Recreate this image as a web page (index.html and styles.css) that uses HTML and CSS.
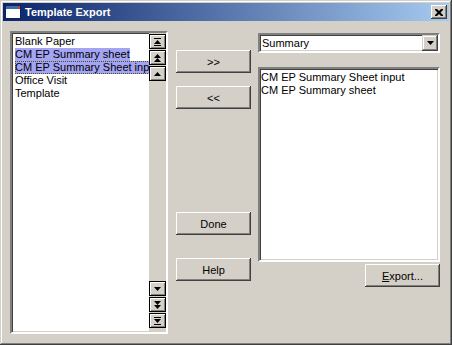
FILE: index.html
```html
<!DOCTYPE html>
<html>
<head>
  <title>Template Export</title>
  <link rel="stylesheet" href="styles.css">
</head>
<body>
  <div class="window">
    <div class="titlebar">
      <svg class="app-icon" width="16" height="14" viewBox="0 0 16 14">
        <rect x="0.5" y="0.5" width="15" height="13" fill="#fff" stroke="#0a246a"/>
        <rect x="1" y="1" width="14" height="3" fill="#3a6ea5"/>
        <rect x="13" y="1" width="2" height="3" fill="#d04020"/>
      </svg>
      <span class="title">Template Export</span>
      <div class="close-btn">
        <svg width="8" height="7" viewBox="0 0 8 7">
          <path d="M0 0h2l2 2 2-2h2v1l-2.5 2.5L8 6v1H6L4 5 2 7H0V6l2.5-2.5L0 1z" fill="#000"/>
        </svg>
      </div>
    </div>

    <div class="client">
      <div class="listbox left-list">
        <ul class="items">
          <li><span>Blank Paper</span></li>
          <li class="sel"><span>CM EP Summary sheet</span></li>
          <li class="sel focus"><span>CM EP Summary Sheet input</span></li>
          <li><span>Office Visit</span></li>
          <li><span>Template</span></li>
        </ul>
        <div class="scrollbar">
          <div class="sbtn">
            <svg width="15" height="12" viewBox="0 0 15 12"><rect x="4" y="2" width="7" height="1"/><path d="M7.5 4 4 8h7z"/><rect x="4" y="9" width="7" height="1"/></svg>
          </div>
          <div class="sbtn">
            <svg width="15" height="12" viewBox="0 0 15 12"><path d="M7.5 2 4 6h7z"/><path d="M7.5 6 4 10h7z"/></svg>
          </div>
          <div class="sbtn">
            <svg width="15" height="12" viewBox="0 0 15 12"><path d="M7.5 4 4 8h7z"/></svg>
          </div>
          <div class="track"></div>
          <div class="sbtn">
            <svg width="15" height="12" viewBox="0 0 15 12"><path d="M4 4h7l-3.5 4z"/></svg>
          </div>
          <div class="sbtn">
            <svg width="15" height="12" viewBox="0 0 15 12"><path d="M4 2h7l-3.5 4z"/><path d="M4 6h7l-3.5 4z"/></svg>
          </div>
          <div class="sbtn">
            <svg width="15" height="12" viewBox="0 0 15 12"><rect x="4" y="2" width="7" height="1"/><path d="M4 4h7l-3.5 4z"/><rect x="4" y="9" width="7" height="1"/></svg>
          </div>
        </div>
      </div>

      <div class="middle">
        <div class="btn add-btn">&gt;&gt;</div>
        <div class="btn remove-btn">&lt;&lt;</div>
        <div class="btn done-btn">Done</div>
        <div class="btn help-btn">Help</div>
      </div>

      <div class="right">
        <div class="combo">
          <span class="combo-text">Summary</span>
          <div class="combo-btn">
            <svg width="7" height="4" viewBox="0 0 7 4"><path d="M0 0h7L3.5 4z"/></svg>
          </div>
        </div>
        <div class="listbox right-list">
          <ul class="items">
            <li><span>CM EP Summary Sheet input</span></li>
            <li><span>CM EP Summary sheet</span></li>
          </ul>
        </div>
        <div class="btn export-btn"><u>E</u>xport...</div>
      </div>
    </div>
  </div>
</body>
</html>
```

FILE: styles.css
```css
body {
  margin: 0;
  font-family: "Liberation Sans", Arial, sans-serif;
  font-size: 11px;
  color: #000;
}

.window {
  width: 452px;
  height: 345px;
  box-sizing: border-box;
  padding: 3px;
  background-color: #d4d0c8;
  box-shadow: inset -1px -1px #404040, inset 1px 1px #d4d0c8,
              inset -2px -2px #808080, inset 2px 2px #fff;
}

.titlebar {
  height: 18px;
  display: flex;
  align-items: center;
  background: linear-gradient(to right, #0a246a, #a6caf0);
  padding-left: 2px;
}

.app-icon {
  flex: none;
}

.title {
  margin-left: 4px;
  color: #fff;
  font-weight: bold;
  font-size: 11px;
  flex: 1;
}

.close-btn {
  width: 16px;
  height: 14px;
  margin-right: 2px;
  background-color: #d4d0c8;
  box-sizing: border-box;
  display: flex;
  align-items: center;
  justify-content: center;
  box-shadow: inset -1px -1px #404040, inset 1px 1px #fff,
              inset -2px -2px #808080;
}

.client {
  display: flex;
  align-items: flex-start;
  padding: 10px 0 0 7px;
}

.listbox {
  background-color: #fff;
  box-sizing: border-box;
  border: 2px solid;
  border-color: #808080 #fff #fff #808080;
  box-shadow: inset 1px 1px #404040, inset -1px -1px #d4d0c8;
}

.left-list {
  width: 158px;
  height: 303px;
  display: flex;
}

.items {
  list-style: none;
  margin: 0;
  padding: 2px 2px 0 3px;
  flex: 1;
  min-width: 0;
  overflow: hidden;
}

.items li {
  height: 13px;
  line-height: 13px;
  white-space: nowrap;
}

.items span {
  display: inline-block;
  height: 13px;
  box-sizing: border-box;
}

.sel span {
  background-color: #a4a4f4;
}

.focus span {
  outline: 1px dotted #505010;
  outline-offset: -1px;
}

.scrollbar {
  width: 17px;
  display: flex;
  flex-direction: column;
  background-color: #d4d0c8;
  padding-top: 1px;
  padding-bottom: 3px;
}

.sbtn {
  height: 15px;
  margin-bottom: 1px;
  border: 1px solid #000;
  box-sizing: border-box;
  background-color: #d4d0c8;
  box-shadow: inset 1px 1px #fff, inset -1px -1px #808080;
  display: flex;
  align-items: center;
  justify-content: center;
}

.sbtn svg {
  fill: #000;
}

.track {
  flex: 1;
}

.btn {
  width: 75px;
  height: 23px;
  box-sizing: border-box;
  background-color: #d4d0c8;
  box-shadow: inset -1px -1px #404040, inset 1px 1px #fff,
              inset -2px -2px #808080, inset 2px 2px #d4d0c8;
  display: flex;
  align-items: center;
  justify-content: center;
}

.middle {
  width: 75px;
  margin-left: 8px;
  display: flex;
  flex-direction: column;
}

.add-btn {
  margin-top: 19px;
}

.remove-btn {
  margin-top: 13px;
}

.done-btn {
  margin-top: 103px;
}

.help-btn {
  margin-top: 23px;
}

.right {
  width: 182px;
  margin-left: 7px;
  display: flex;
  flex-direction: column;
}

.combo {
  margin-top: 2px;
  height: 20px;
  box-sizing: border-box;
  background-color: #fff;
  border: 2px solid;
  border-color: #808080 #fff #fff #808080;
  box-shadow: inset 1px 1px #404040, inset -1px -1px #d4d0c8;
  display: flex;
  align-items: center;
}

.combo-text {
  flex: 1;
  padding-left: 2px;
}

.combo-btn {
  width: 16px;
  height: 16px;
  box-sizing: border-box;
  background-color: #d4d0c8;
  box-shadow: inset -1px -1px #404040, inset 1px 1px #d4d0c8,
              inset -2px -2px #808080, inset 2px 2px #fff;
  display: flex;
  align-items: center;
  justify-content: center;
}

.right-list {
  margin-top: 14px;
  height: 195px;
}

.right-list .items {
  padding-left: 1px;
}

.export-btn {
  margin-top: 2px;
  align-self: flex-end;
}
```
